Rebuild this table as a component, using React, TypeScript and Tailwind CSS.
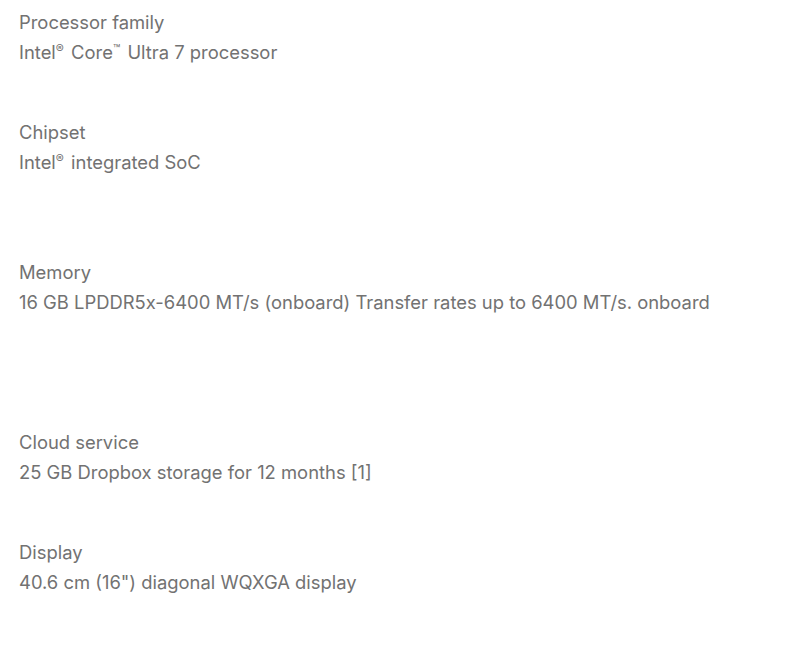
const SPECS = [
  { label: 'Processor family', value: 'Intel® Core™ Ultra 7 processor', gap: 'mb-[50px]' },
  { label: 'Chipset', value: 'Intel® integrated SoC', gap: 'mb-[80px]' },
  {
    label: 'Memory',
    value: '16 GB LPDDR5x-6400 MT/s (onboard) Transfer rates up to 6400 MT/s. onboard',
    gap: 'mb-[110px]',
  },
  { label: 'Cloud service', value: '25 GB Dropbox storage for 12 months [1]', gap: 'mb-[50px]' },
  { label: 'Display', value: '40.6 cm (16") diagonal WQXGA display', gap: '' },
];

function Sup({ text }: { text: string }) {
  // ® and ™ are set smaller and raised
  const parts = text.split(/([®™])/);
  return (
    <>
      {parts.map((p, i) =>
        p === '®' || p === '™' ? (
          <sup key={i} className="text-[12px] relative top-[-6px] mr-[2px]">
            {p}
          </sup>
        ) : (
          <span key={i}>{p}</span>
        ),
      )}
    </>
  );
}

export default function App() {
  return (
    <div
      className="min-h-[656px] w-[792px] bg-white pt-[7px] pl-[19px] text-[#727272]"
      style={{ fontFamily: 'Inter, "Noto Sans", sans-serif' }}
    >
      {SPECS.map((s) => (
        <div key={s.label} className={`text-[18.4px] leading-[30px] ${s.gap}`}>
          <div>{s.label}</div>
          <div>
            <Sup text={s.value} />
          </div>
        </div>
      ))}
    </div>
  );
}
